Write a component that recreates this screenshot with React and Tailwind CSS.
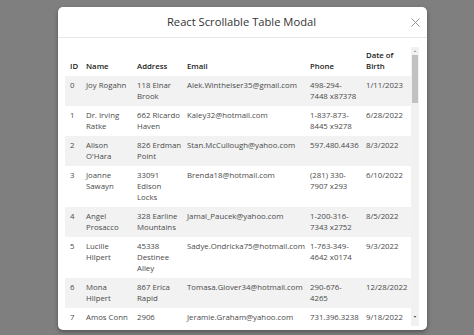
import React from "react";

const rows = [
  { id: 0, name: "Joy Rogahn", address: "118 Elnar Brook", email: "Alek.Wintheiser35@gmail.com", phone: "498-294-7448 x87378", dob: "1/11/2023" },
  { id: 1, name: "Dr. Irving Ratke", address: "662 Ricardo Haven", email: "Kaley32@hotmail.com", phone: "1-837-873-8445 x9278", dob: "6/28/2022" },
  { id: 2, name: "Alison O'Hara", address: "826 Erdman Point", email: "Stan.McCullough@yahoo.com", phone: "597.480.4436", dob: "8/3/2022" },
  { id: 3, name: "Joanne Sawayn", address: "33091 Edison Locks", email: "Brenda18@hotmail.com", phone: "(281) 330-7907 x293", dob: "6/10/2022" },
  { id: 4, name: "Angel Prosacco", address: "328 Earline Mountains", email: "Jamal_Paucek@yahoo.com", phone: "1-200-316-7343 x2752", dob: "8/5/2022" },
  { id: 5, name: "Lucille Hilpert", address: "45338 Destinee Alley", email: "Sadye.Ondricka75@hotmail.com", phone: "1-763-349-4642 x0174", dob: "9/3/2022" },
  { id: 6, name: "Mona Hilpert", address: "867 Erica Rapid", email: "Tomasa.Glover34@hotmail.com", phone: "290-676-4265", dob: "12/28/2022" },
  { id: 7, name: "Amos Conn", address: "2906 Reichert Mission", email: "Jeramie.Graham@yahoo.com", phone: "731.396.3238", dob: "9/18/2022" },
  { id: 8, name: "Ida Schultz", address: "741 Nader Ways", email: "Ida.Schultz@gmail.com", phone: "555.201.8890", dob: "3/2/2023" },
];

export default function App() {
  return (
    <div className="h-[335px] w-[474px] overflow-hidden bg-[#7f7f7f] pt-[7px] font-['Open_Sans',sans-serif]">
      <div className="ml-[58px] flex h-[323px] w-[369px] flex-col overflow-hidden rounded-[5px] bg-white shadow-[0_2px_4px_rgba(0,0,0,0.35)]">
        <div className="flex h-[31px] shrink-0 items-center border-b border-[#e6e6e6] pl-[14px] pr-[7px]">
          <div className="flex-1 text-center text-[11.2px] text-[#333]">React Scrollable Table Modal</div>
          <svg width="9" height="9" viewBox="0 0 9 9" className="mt-[1px]">
            <path d="M0.5 0.5 L8.5 8.5 M8.5 0.5 L0.5 8.5" stroke="#8a8a8a" strokeWidth="0.9" fill="none" />
          </svg>
        </div>
        <div className="flex min-h-0 flex-1 overflow-hidden pb-[4px] pl-[7px] pr-[8px] pt-[9px]">
          <div className="w-[346px] overflow-hidden">
            <table className="w-[346px] table-fixed border-collapse text-left text-[7.8px] leading-[11px]">
              <colgroup>
                <col className="w-[16px]" />
                <col className="w-[51px]" />
                <col className="w-[50px]" />
                <col className="w-[123px]" />
                <col className="w-[56px]" />
                <col className="w-[50px]" />
              </colgroup>
              <thead>
                <tr className="h-[29px] align-bottom text-[#222]">
                  <th className="pb-[4px] pl-[5px] font-semibold">ID</th>
                  <th className="pb-[4px] pl-[5px] font-semibold">Name</th>
                  <th className="pb-[4px] pl-[5px] font-semibold">Address</th>
                  <th className="pb-[4px] pl-[5px] font-semibold">Email</th>
                  <th className="pb-[4px] pl-[5px] pr-[3px] font-semibold">Phone</th>
                  <th className="pb-[4px] pl-[5px] font-semibold">Date of Birth</th>
                </tr>
              </thead>
              <tbody className="text-[#4a4a4a]">
                {rows.map((r, i) => (
                  <tr key={r.id} className={i % 2 === 0 ? "bg-[#f2f2f2] align-top" : "bg-white align-top"}>
                    <td className="py-[4px] pl-[5px]">{r.id}</td>
                    <td className="py-[4px] pl-[5px]">{r.name}</td>
                    <td className="py-[4px] pl-[5px]">{r.address}</td>
                    <td className="py-[4px] pl-[5px]">{r.email}</td>
                    <td className="py-[4px] pl-[5px] pr-[3px]">{r.phone}</td>
                    <td className="py-[4px] pl-[5px]">{r.dob}</td>
                  </tr>
                ))}
              </tbody>
            </table>
          </div>
          <div className="flex w-[8px] flex-col items-center bg-[#f1f1f1]">
            <svg width="8" height="8" viewBox="0 0 8 8" className="shrink-0">
              <path d="M2.5 5 L4 3.3 L5.5 5 Z" fill="#a3a3a3" />
            </svg>
            <div className="h-[48px] w-[6px] shrink-0 bg-[#c1c1c1]" />
            <div className="flex-1" />
            <svg width="8" height="8" viewBox="0 0 8 8" className="mb-[5px] shrink-0">
              <path d="M2.5 3 L4 4.7 L5.5 3 Z" fill="#555" />
            </svg>
          </div>
        </div>
      </div>
    </div>
  );
}
